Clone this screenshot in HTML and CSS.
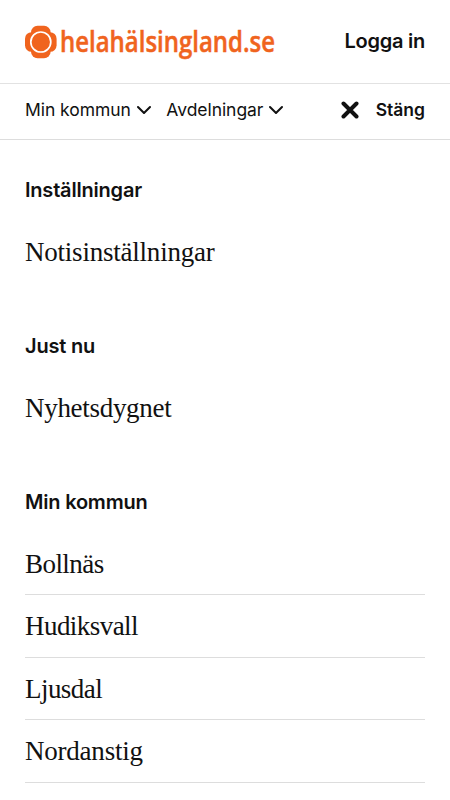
FILE: index.html
```html
<!DOCTYPE html>
<html lang="sv">
<head>
    <meta charset="UTF-8">
    <meta name="viewport" content="width=device-width, initial-scale=1.0">
    <title>helahälsingland.se</title>
    <link rel="stylesheet" href="styles.css">
</head>
<body>

    <header class="header">
        <a class="logo" href="#">
            <svg width="264" height="50" viewBox="0 0 264 50">
                <g fill="#f0641e">
                    <rect x="6" y="8.8" width="19.6" height="32.4" rx="6.5"/>
                    <rect x="0" y="15.2" width="31.6" height="19.6" rx="6.5"/>
                    <circle cx="15.8" cy="25" r="12.8"/>
                </g>
                <circle cx="15.8" cy="25" r="10" fill="#f0641e" stroke="#fff" stroke-width="1.7"/>
                <text class="logo-text" x="35" y="34.5" textLength="215" lengthAdjust="spacingAndGlyphs">helahälsingland.se</text>
            </svg>
        </a>
        <a class="login" href="#">Logga in</a>
    </header>

    <nav class="nav">
        <a class="nav-item" href="#">
            <span>Min kommun</span>
            <svg class="chevron" width="14" height="9" viewBox="0 0 14 9"><path d="M1 2l6 6 6-6"/></svg>
        </a>
        <a class="nav-item" href="#">
            <span>Avdelningar</span>
            <svg class="chevron" width="14" height="9" viewBox="0 0 14 9"><path d="M1 2l6 6 6-6"/></svg>
        </a>
        <button class="close">
            <svg class="cross" width="18" height="18" viewBox="0 0 18 18"><path d="M2.5 2.5l13 13M15.5 2.5l-13 13"/></svg>
            <span>Stäng</span>
        </button>
    </nav>

    <main class="menu">
        <section class="section">
            <h2>Inställningar</h2>
            <ul class="wide">
                <li><a href="#">Notisinställningar</a></li>
            </ul>
        </section>
        <section class="section">
            <h2>Just nu</h2>
            <ul>
                <li><a href="#">Nyhetsdygnet</a></li>
            </ul>
        </section>
        <section class="section">
            <h2>Min kommun</h2>
            <ul class="lined">
                <li><a href="#">Bollnäs</a></li>
                <li><a href="#">Hudiksvall</a></li>
                <li><a href="#">Ljusdal</a></li>
                <li class="wide"><a href="#">Nordanstig</a></li>
            </ul>
        </section>
    </main>

</body>
</html>
```
FILE: styles.css
```css
* {
    margin: 0;
    padding: 0;
    box-sizing: border-box;
}

body {
    font-family: Inter, "Liberation Sans", sans-serif;
    background: #fff;
    color: #111;
    height: 100vh;
    overflow: hidden;
}

a {
    color: inherit;
    text-decoration: none;
}

.header {
    display: flex;
    justify-content: space-between;
    align-items: center;
    height: 84px;
    padding: 0 25px 2px;
    border-bottom: 1px solid #e2e2e2;
}

.logo {
    display: flex;
    padding-top: 2px;
}

.logo svg {
    overflow: visible;
}

.logo-text {
    font-family: "Open Sans", "Noto Sans", sans-serif;
    font-size: 29px;
    font-weight: 600;
    fill: #f0641e;
    stroke: #f0641e;
    stroke-width: 0.5;
}

.login {
    font-size: 20px;
    font-weight: 600;
    letter-spacing: -0.25px;
}

.nav {
    display: flex;
    align-items: center;
    gap: 15.5px;
    height: 56px;
    padding: 0 25px 4px;
    border-bottom: 1px solid #ddd;
    font-size: 17.5px;
    letter-spacing: -0.05px;
}

.nav-item {
    display: flex;
    align-items: center;
    gap: 6px;
}

.chevron {
    fill: none;
    stroke: #111;
    stroke-width: 2;
    stroke-linecap: round;
    stroke-linejoin: round;
}

.close {
    display: flex;
    align-items: center;
    gap: 17px;
    margin-left: auto;
    border: 0;
    background: none;
    color: inherit;
    font: inherit;
    font-weight: 600;
}

.cross {
    stroke: #111;
    stroke-width: 4;
    stroke-linecap: round;
}

.menu {
    padding: 37.5px 25px 0;
}

.section {
    margin-bottom: 50.5px;
}

.section h2 {
    font-size: 20px;
    font-weight: 600;
    line-height: 25px;
    letter-spacing: -0.2px;
    margin-bottom: 18px;
}

.section ul {
    list-style: none;
}

.section li {
    height: 62.5px;
    font-family: "Liberation Serif", "Times New Roman", serif;
    font-size: 27px;
    line-height: 63px;
    letter-spacing: -0.3px;
}

.section .wide,
.section .wide li {
    letter-spacing: -0.22px;
}

.section .lined li {
    border-bottom: 1px solid #ddd;
}

.section .lined li:not(.wide) {
    letter-spacing: -0.55px;
}
```
